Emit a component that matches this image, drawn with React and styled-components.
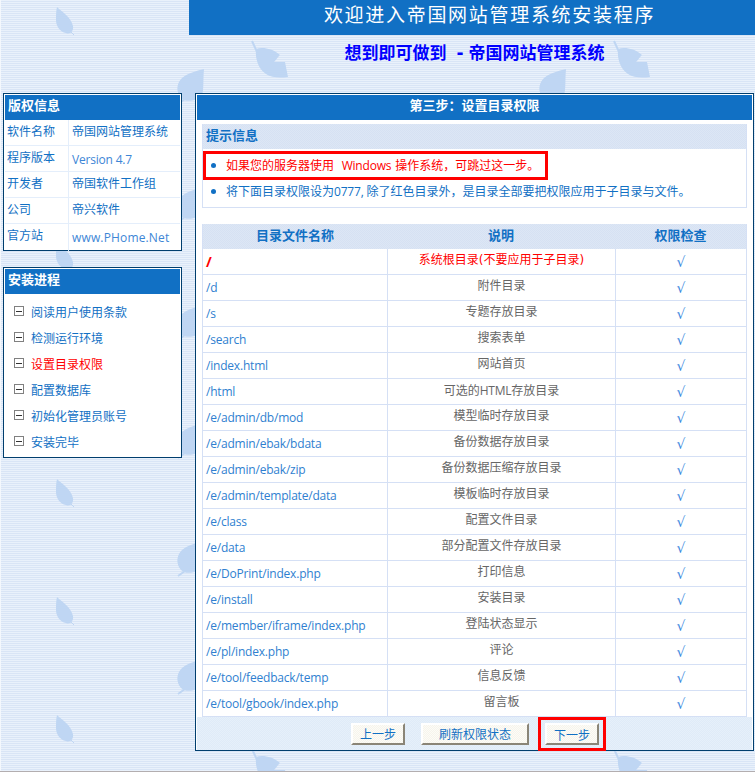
import React from "react";
import styled, { createGlobalStyle } from "styled-components";

const leafTile = encodeURIComponent(`<svg xmlns="http://www.w3.org/2000/svg" width="362" height="118">
<g fill="#bfd6f3">
<path d="M57 7C62 12 71 17 73 26C74 31 70 35 66 33C60 32 56 26 56 20C56 15 56 11 57 7Z"/>
<path d="M71 32L74 35" stroke="#bfd6f3"/>
<path d="M256 49C262 47 272 48 280 55C277 58 276 60 274 62C278 62 282 62 285 62C286 67 287 72 288 77C280 78 272 78 266 74C258 69 255 58 256 49Z"/>
<path d="M252 41L258 54" stroke="#bfd6f3" stroke-width="2" fill="none"/>
<path d="M204 69C203 80 204 90 202 95C197 101 186 103 181 98C176 92 176 84 182 78C188 73 196 71 204 69Z"/>
<path d="M185 99L178 104" stroke="#bfd6f3" stroke-width="2" fill="none"/>
</g></svg>`);

const latinFont = `"Open Sans", "Noto Sans CJK SC", sans-serif`;

const GlobalStyle = createGlobalStyle`
  html, body {
    margin: 0;
    padding: 0;
  }
  body {
    font-family: "DejaVu Sans", "Noto Sans CJK SC", sans-serif;
    font-size: 12px;
    color: #1170c4;
  }
`;

const Page = styled.div`
  box-sizing: border-box;
  height: 100vh;
  overflow: hidden;
  border-bottom: 1px solid #b3aeb0;
  background:
    linear-gradient(#f4f8fd, #f4f8fd) 0 0 / 1px 100% no-repeat,
    url("data:image/svg+xml,${leafTile}") 0 0 repeat,
    repeating-linear-gradient(#e9f1fb 0 1px, #d9e5f6 1px 2px);
`;

const TitleBar = styled.h1`
  margin: 0 0 0 189px;
  height: 35px;
  padding-left: 35px;
  background: #1170c4;
  color: #fff;
  font-size: 19px;
  font-weight: 400;
  letter-spacing: 1.7px;
  line-height: 31px;
  text-align: center;
`;

const Columns = styled.div`
  display: grid;
  grid-template-columns: 179px 559px;
  column-gap: 13px;
  padding-left: 3px;
`;

const Slogan = styled.h2`
  grid-column: 2;
  margin: 0;
  height: 58px;
  color: #0000ff;
  font-size: 17px;
  font-weight: 700;
  word-spacing: -1px;
  line-height: 37px;
  text-align: center;
  white-space: pre;
`;

const Sidebar = styled.aside`
  grid-column: 1;
  display: flex;
  flex-direction: column;
  gap: 16px;
`;

const Panel = styled.section`
  border: 1px solid #003e6e;
  padding: 1px;
  background: #fff;
`;

const PanelTitle = styled.div`
  height: 25px;
  padding-left: ${(p) => (p.$center ? 0 : "3px")};
  background: #1170c4;
  color: #fff;
  font-size: 13px;
  font-weight: 700;
  line-height: 22px;
  text-align: ${(p) => (p.$center ? "center" : "left")};
`;

const InfoRow = styled.div`
  display: grid;
  grid-template-columns: 64px 1fr;
  height: 26px;
  box-sizing: border-box;
  line-height: 25px;
  border-bottom: 1px solid #e4eefb;
  &:last-child {
    height: 25px;
    border-bottom: 0;
  }
`;

const InfoLabel = styled.div`
  padding-left: 2px;
  border-right: 1px solid #e4eefb;
`;

const InfoValue = styled.div`
  padding-left: 3px;
  line-height: ${(p) => (p.$latin ? "27px" : "25px")};
  font-family: ${(p) => (p.$latin ? latinFont : "inherit")};
  letter-spacing: ${(p) => p.$spacing || 0};
  color: ${(p) => (p.$latin ? "#3d86d6" : "inherit")};
`;

const StepList = styled.ul`
  list-style: none;
  margin: 0;
  padding: 4px 0 2px 9px;
`;

const Step = styled.li`
  display: flex;
  align-items: center;
  gap: 7px;
  height: 26px;
  color: ${(p) => (p.$current ? "#ff0000" : "inherit")};
`;

const StepBox = styled.span`
  box-sizing: border-box;
  width: 10px;
  height: 10px;
  border: 1px solid #808080;
  display: flex;
  align-items: center;
  justify-content: center;
  &::before {
    content: "";
    width: 6px;
    height: 1px;
    background: #333;
  }
`;

const MainPanel = styled(Panel)`
  grid-column: 2;
  grid-row: 2;
  height: 658px;
  box-sizing: border-box;
`;

const MainBody = styled.div`
  padding: 4px 5px 0;
`;

const TipTable = styled.div`
  border: 1px solid #d5e0f5;
  border-top: 0;
  height: 84px;
  box-sizing: border-box;
  margin-bottom: 16px;
`;

const HeadCell = styled.div`
  height: 25px;
  line-height: 23px;
  font-size: 13px;
  font-weight: 700;
  text-align: ${(p) => (p.$left ? "left" : "center")};
  padding-left: ${(p) => (p.$left ? "3px" : 0)};
  background: repeating-conic-gradient(#d6e1f3 0 25%, #dde7f5 0 50%) 0 0 / 2px 2px;
`;

const TipRow = styled.div`
  box-sizing: border-box;
  display: flex;
  align-items: center;
  gap: 10px;
  height: ${(p) => (p.$warn ? "29px" : "23px")};
  margin: ${(p) => (p.$warn ? "2px 0 0" : 0)};
  width: ${(p) => (p.$warn ? "345px" : "auto")};
  padding-left: ${(p) => (p.$warn ? "5px" : "8px")};
  padding-bottom: 1px;
  border: ${(p) => (p.$warn ? "3px solid #ff0000" : 0)};
  color: ${(p) => (p.$warn ? "#ff0000" : "inherit")};
  white-space: pre;
`;

const Dot = styled.span`
  flex: none;
  width: 5px;
  height: 5px;
  border-radius: 50%;
  background: #1170c4;
`;

const Latin = styled.span`
  font-family: ${latinFont};
  letter-spacing: -0.2px;
`;

const DirTable = styled.div`
  display: grid;
  grid-template-columns: 184px 228px 1fr;
  border: 1px solid #d5e0f5;
  border-top: 0;
  border-bottom-width: 0;
`;

const DirCell = styled.div`
  box-sizing: border-box;
  height: 26px;
  line-height: ${(p) => (p.$path ? "26px" : "23px")};
  border-bottom: 1px solid #d5e0f5;
  border-left: ${(p) => (p.$path ? 0 : "1px solid #d5e0f5")};
  padding-left: ${(p) => (p.$path ? "3px" : 0)};
  text-align: ${(p) => (p.$path ? "left" : "center")};
  color: ${(p) => (p.$danger ? "#ff0000" : p.$path ? "#2f7fd0" : "#666")};
  font-weight: ${(p) => (p.$root ? 700 : 400)};
  font-size: ${(p) => (p.$root ? "14px" : "12px")};
  font-family: ${(p) => (p.$path ? latinFont : "inherit")};
  letter-spacing: ${(p) => (p.$path ? "-0.2px" : 0)};
`;

const CheckCell = styled(DirCell)`
  color: #3d8ae0;
  font-size: 14px;
  line-height: 26px;
`;

const Footer = styled.div`
  display: flex;
  align-items: center;
  height: 33px;
  padding-left: 154px;
  background: repeating-conic-gradient(#dfebf8 0 25%, #e6f0fa 0 50%) 0 0 / 2px 2px;
`;

const Button = styled.button`
  box-sizing: border-box;
  width: ${(p) => (p.$wide ? "108px" : "54px")};
  height: 22px;
  margin-right: ${(p) => (p.$wide ? "9px" : "16px")};
  padding: 0;
  border: 2px solid;
  border-color: #fff #8a8577 #8a8577 #fff;
  background: repeating-conic-gradient(#f6f4ec 0 25%, #fdfcf7 0 50%) 0 0 / 2px 2px;
  color: #1170c4;
  font: inherit;
`;

const NextBox = styled.div`
  box-sizing: border-box;
  display: flex;
  align-items: center;
  height: 34px;
  margin-top: 1px;
  padding: 0 4px;
  border: 3px solid #ff0000;
  & > button {
    margin: 0;
  }
`;

const info = [
  ["软件名称", "帝国网站管理系统"],
  ["程序版本", "Version 4.7", true, "-0.2px"],
  ["开发者", "帝国软件工作组"],
  ["公司", "帝兴软件"],
  ["官方站", "www.PHome.Net", true, "0.15px"],
];

const steps = ["阅读用户使用条款", "检测运行环境", "设置目录权限", "配置数据库", "初始化管理员账号", "安装完毕"];

const dirs = [
  ["/d", "附件目录"],
  ["/s", "专题存放目录"],
  ["/search", "搜索表单"],
  ["/index.html", "网站首页"],
  ["/html", <>可选的<Latin>HTML</Latin>存放目录</>],
  ["/e/admin/db/mod", "模型临时存放目录"],
  ["/e/admin/ebak/bdata", "备份数据存放目录"],
  ["/e/admin/ebak/zip", "备份数据压缩存放目录"],
  ["/e/admin/template/data", "模板临时存放目录"],
  ["/e/class", "配置文件目录"],
  ["/e/data", "部分配置文件存放目录"],
  ["/e/DoPrint/index.php", "打印信息"],
  ["/e/install", "安装目录"],
  ["/e/member/iframe/index.php", "登陆状态显示"],
  ["/e/pl/index.php", "评论"],
  ["/e/tool/feedback/temp", "信息反馈"],
  ["/e/tool/gbook/index.php", "留言板"],
];

export default function App() {
  return (
    <Page>
      <GlobalStyle />
      <TitleBar>欢迎进入帝国网站管理系统安装程序</TitleBar>
      <Columns>
        <Slogan>{"想到即可做到  - 帝国网站管理系统"}</Slogan>
        <Sidebar>
          <Panel>
            <PanelTitle>版权信息</PanelTitle>
            {info.map(([label, value, latin, spacing]) => (
              <InfoRow key={label}>
                <InfoLabel>{label}</InfoLabel>
                <InfoValue $latin={latin} $spacing={spacing}>{value}</InfoValue>
              </InfoRow>
            ))}
          </Panel>
          <Panel>
            <PanelTitle>安装进程</PanelTitle>
            <StepList>
              {steps.map((s, i) => (
                <Step key={s} $current={i === 2}>
                  <StepBox />
                  {s}
                </Step>
              ))}
            </StepList>
          </Panel>
        </Sidebar>
        <MainPanel>
          <PanelTitle $center>第三步：设置目录权限</PanelTitle>
          <MainBody>
            <TipTable>
              <HeadCell $left>提示信息</HeadCell>
              <TipRow $warn>
                <Dot />
                <span>如果您的服务器使用{"  "}<Latin>Windows</Latin> 操作系统，可跳过这一步。</span>
              </TipRow>
              <TipRow>
                <Dot />
                <span>将下面目录权限设为<Latin>0777, </Latin>除了红色目录外，是目录全部要把权限应用于子目录与文件。</span>
              </TipRow>
            </TipTable>
            <DirTable>
              <HeadCell>目录文件名称</HeadCell>
              <HeadCell>说明</HeadCell>
              <HeadCell>权限检查</HeadCell>
              <DirCell $path $root $danger>/</DirCell>
              <DirCell $danger>系统根目录(不要应用于子目录)</DirCell>
              <CheckCell>√</CheckCell>
              {dirs.map(([path, note]) => (
                <React.Fragment key={path}>
                  <DirCell $path>{path}</DirCell>
                  <DirCell>{note}</DirCell>
                  <CheckCell>√</CheckCell>
                </React.Fragment>
              ))}
            </DirTable>
          </MainBody>
          <Footer>
            <Button>上一步</Button>
            <Button $wide>刷新权限状态</Button>
            <NextBox>
              <Button>下一步</Button>
            </NextBox>
          </Footer>
        </MainPanel>
      </Columns>
    </Page>
  );
}
